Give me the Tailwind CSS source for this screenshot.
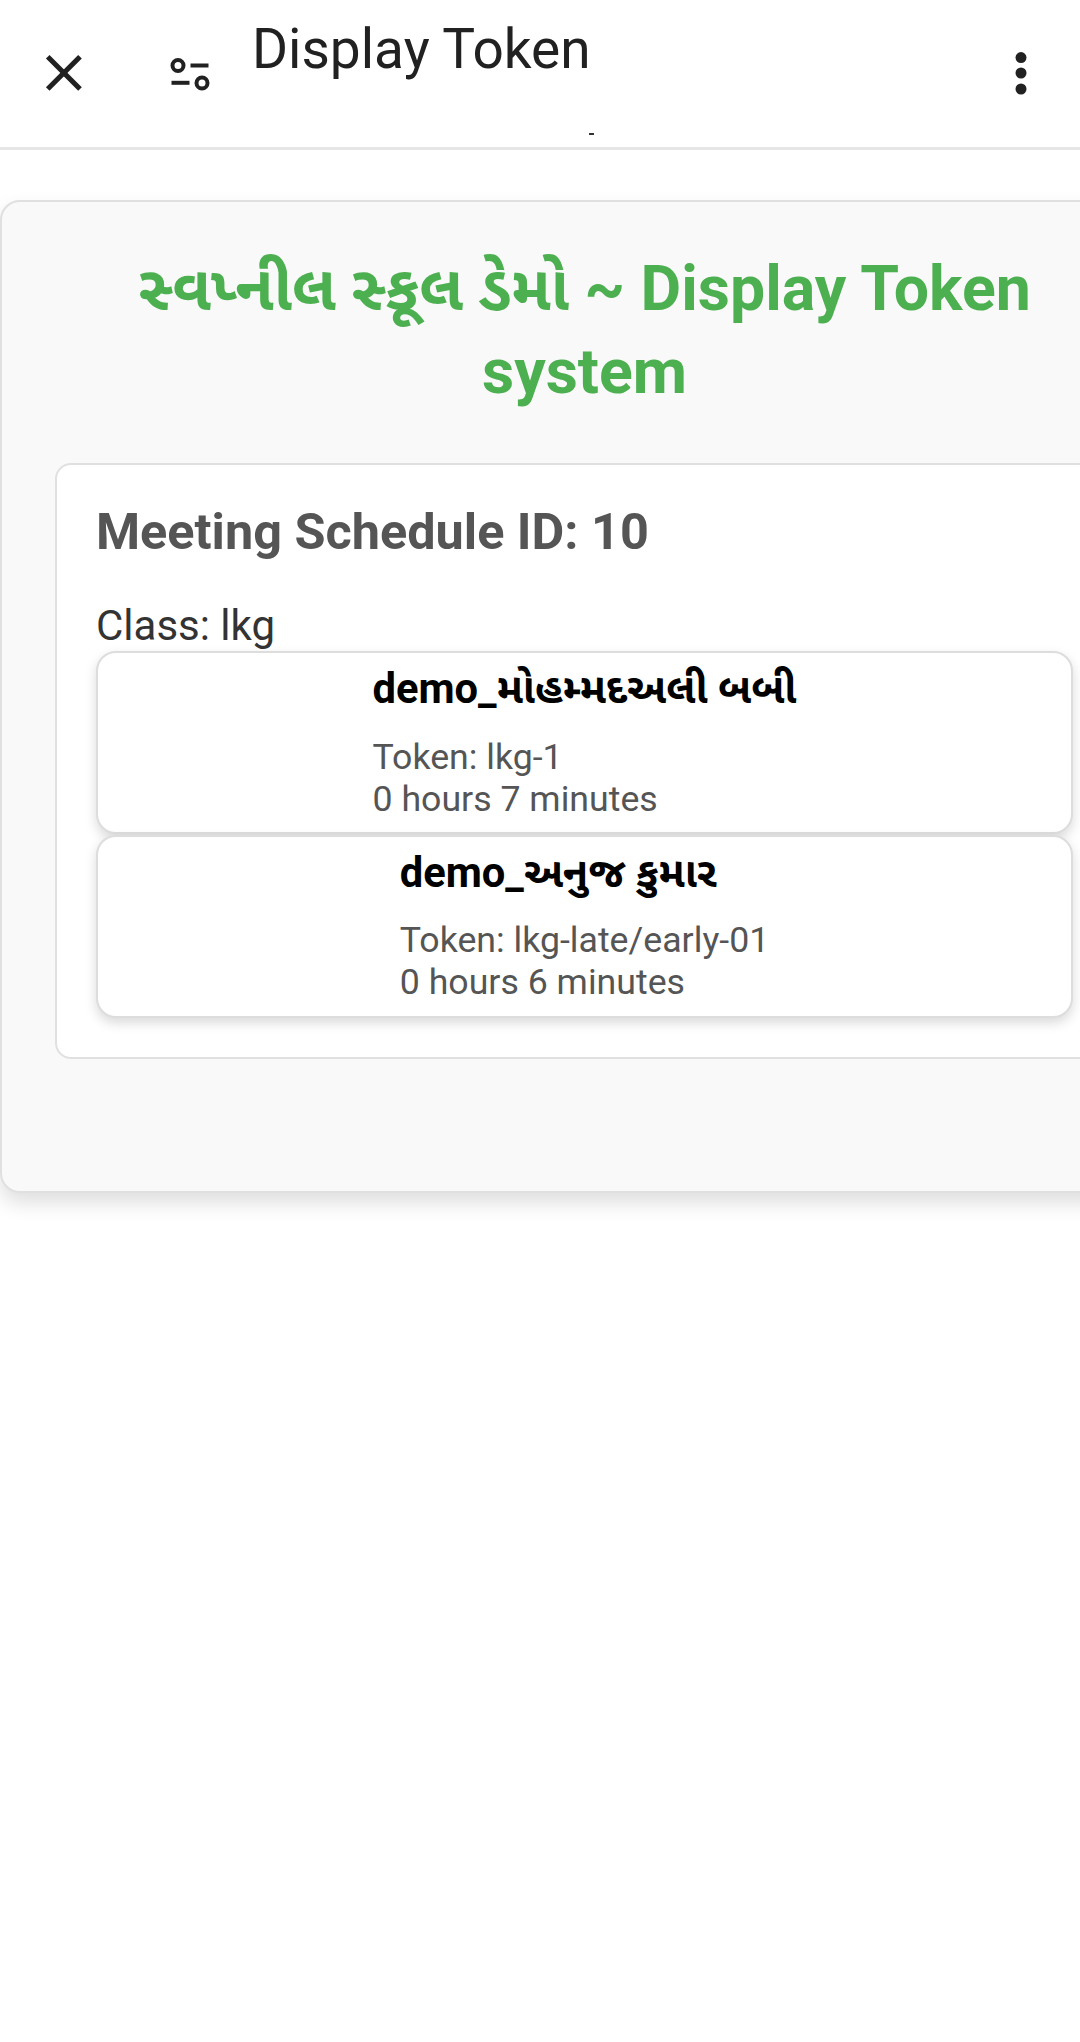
<!doctype html>
<html lang="en">
<head>
  <meta charset="UTF-8" />
  <meta name="viewport" content="width=device-width, initial-scale=1.0" />
  <script src="https://cdn.jsdelivr.net/npm/@tailwindcss/browser@4"></script>
  <title>Display Token</title>
</head>
<body class="bg-white font-['Roboto','Noto_Sans_Gujarati','Noto_Sans',sans-serif]">
  <div class="w-[1080px] h-[2042px] overflow-hidden relative">
    <!-- app bar -->
    <header class="h-[150px] border-b-[3px] border-[#e5e5e5] flex items-start relative">
      <button class="w-[64px] h-[64px] ml-[32px] mt-[41px] flex items-center justify-center text-[#212121]">
        <svg class="w-[64px] h-[64px]" viewBox="0 0 24 24" fill="none" stroke="currentColor" stroke-width="1.9"><path d="M5.9 5.9 18 18"/><path d="M18 5.9 5.9 18"/></svg>
      </button>
      <button class="w-[48px] h-[48px] ml-[70px] mt-[50px] flex items-center justify-center text-[#212121]">
        <svg class="w-[48px] h-[48px]" viewBox="0 0 24 24" fill="none" stroke="currentColor" stroke-width="2"><circle cx="6" cy="7.75" r="2.75"/><path d="M12.25 7.75h9"/><path d="M2.75 16.4h9"/><circle cx="18" cy="16.5" r="2.75"/></svg>
      </button>
      <h1 class="ml-[38px] mt-[14px] text-[55px] leading-[70px] text-[#212121] font-normal">Display Token</h1>
      <svg class="absolute left-[989px] top-[41px] w-[64px] h-[64px] text-[#212121]" viewBox="0 0 24 24" fill="currentColor"><circle cx="12" cy="6.2" r="2.06"/><circle cx="12" cy="12" r="2.06"/><circle cx="12" cy="18" r="2.06"/></svg>
      <!-- tail of a line scrolled under the bar -->
      <span class="absolute left-[589px] top-[133px] w-[5px] h-[2px] bg-[#333333]"></span>
    </header>

    <main class="pt-[50px]">
      <section class="w-[1169px] h-[993px] bg-[#f9f9f9] border-2 border-[#e0e0e0] rounded-[20px] shadow-[0_10px_20px_rgba(0,0,0,0.13)] px-[53px] pt-[45px]">
        <h2 class="text-[62.6px] leading-[83px] font-bold text-[#4caf50] text-center">સ્વપ્નીલ સ્કૂલ ડેમો ~ Display Token<br />system</h2>
        <div class="mt-[50px] h-[596px] bg-white border-2 border-[#e0e0e0] rounded-[16px] px-[39px] pt-[37px]">
          <h3 class="text-[50.4px] leading-[60px] font-bold text-[#555555]">Meeting Schedule ID: 10</h3>
          <p class="mt-[40px] text-[42px] leading-[48px] text-[#333333]">Class: lkg</p>

          <div class="mt-[1px] h-[183px] bg-white border-2 border-[#dddddd] rounded-[20px] shadow-[0_5px_12px_rgba(0,0,0,0.15)] flex justify-center">
            <div>
              <h4 class="mt-[12px] text-[41.7px] leading-[48px] font-bold text-black">demo_મોહમ્મદઅલી બબી</h4>
              <p class="mt-[23px] text-[35.7px] leading-[42px] text-[#555555]">Token: lkg-1<br />0 hours 7 minutes</p>
            </div>
          </div>
          <div class="mt-[1px] h-[183px] bg-white border-2 border-[#dddddd] rounded-[20px] shadow-[0_5px_12px_rgba(0,0,0,0.15)] flex justify-center">
            <div>
              <h4 class="mt-[12px] text-[41.7px] leading-[48px] font-bold text-black">demo_અનુજ કુમાર</h4>
              <p class="mt-[22px] text-[35.7px] leading-[42px] text-[#555555]">Token: lkg-late/early-01<br />0 hours 6 minutes</p>
            </div>
          </div>
        </div>
      </section>
    </main>
  </div>
</body>
</html>
